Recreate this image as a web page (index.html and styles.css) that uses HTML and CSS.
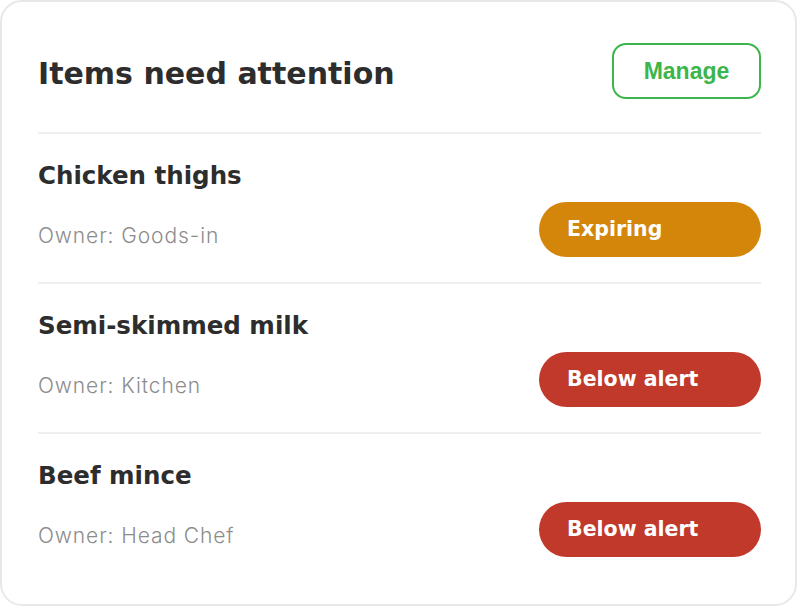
FILE: index.html
```html
<!DOCTYPE html>
<html lang="en">
<head>
<meta charset="utf-8">
<title>Items need attention</title>
<link rel="stylesheet" href="styles.css">
</head>
<body>
<section class="card">
  <header class="card-header">
    <h2 class="card-title">Items need attention</h2>
    <button class="manage-btn" type="button">Manage</button>
  </header>
  <ul class="items">
    <li class="item">
      <span class="item-name">Chicken thighs</span>
      <span class="item-owner">Owner: Goods-in</span>
      <span class="pill pill-expiring">Expiring</span>
    </li>
    <li class="item">
      <span class="item-name">Semi-skimmed milk</span>
      <span class="item-owner">Owner: Kitchen</span>
      <span class="pill pill-alert">Below alert</span>
    </li>
    <li class="item">
      <span class="item-name">Beef mince</span>
      <span class="item-owner">Owner: Head Chef</span>
      <span class="pill pill-alert">Below alert</span>
    </li>
  </ul>
</section>
</body>
</html>
```
FILE: styles.css
```css
* { box-sizing: border-box; }
html, body { margin: 0; padding: 0; background: #ffffff; }
body { font-family: "DejaVu Sans", Inter, sans-serif; color: #2f2f2f; }

.card {
  width: 797px;
  height: 606px;
  border: 2px solid #e8e8e8;
  border-radius: 22px;
  background: #fff;
  padding: 0 34px 0 36px;
}

.card-header {
  display: flex;
  align-items: center;
  justify-content: space-between;
  padding: 41px 0 33px;
  border-bottom: 2px solid #efefef;
}

.card-title {
  margin: 0;
  padding-top: 5px;
  font-size: 30px;
  font-weight: 700;
  line-height: 36px;
  color: #2d2d2d;
}

.manage-btn {
  width: 149px;
  height: 56px;
  border: 2px solid #3cb54b;
  border-radius: 14px;
  background: #fff;
  color: #3cb54b;
  font-family: "Liberation Sans", Arial, sans-serif;
  font-weight: 700;
  font-size: 23px;
  padding: 0;
}

.items { list-style: none; margin: 0; padding: 0; }

.item {
  display: grid;
  grid-template-columns: 1fr auto;
  grid-template-rows: auto auto;
  row-gap: 12px;
  padding: 28px 0 25px;
  border-bottom: 2px solid #efefef;
}
.item:last-child { border-bottom: 0; }

.item-name {
  grid-column: 1 / 3;
  font-size: 24.5px;
  font-weight: 700;
  line-height: 28px;
  color: #2d2d2d;
}

.item-owner {
  align-self: end;
  padding-bottom: 9px;
  font-family: Inter, "DejaVu Sans", sans-serif;
  font-size: 21px;
  font-weight: 300;
  letter-spacing: 0.9px;
  line-height: 24px;
  color: #8c8c8c;
}

.pill {
  width: 222px;
  height: 55px;
  border-radius: 28px;
  padding-left: 28px;
  padding-bottom: 2px;
  display: flex;
  align-items: center;
  color: #fff;
  font-size: 20.5px;
  font-weight: 700;
}
.pill-expiring { background: #d4860b; }
.pill-alert { background: #c0392b; }
```
